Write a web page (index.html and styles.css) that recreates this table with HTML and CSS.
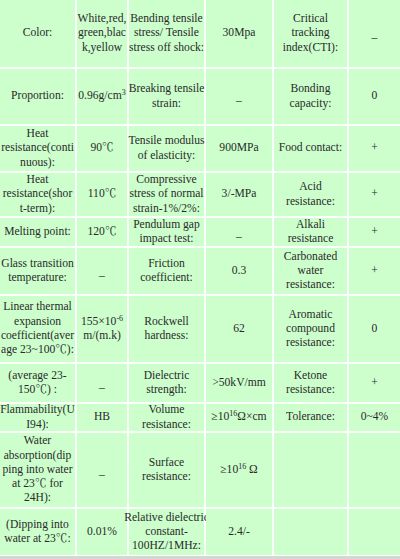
FILE: index.html
```html
<!DOCTYPE html>
<html>
<head>
<meta charset="utf-8">
<link rel="stylesheet" href="styles.css">
</head>
<body>
<div class="sheet">
  <div class="c"><span>Color:</span></div>
  <div class="c"><span>White,red,<br>green,blac<br>k,yellow</span></div>
  <div class="c"><span>Bending tensile<br>stress/ Tensile<br>stress off shock:</span></div>
  <div class="c"><span>30Mpa</span></div>
  <div class="c"><span>Critical<br>tracking<br>index(CTI):</span></div>
  <div class="c dash"><span>–</span></div>

  <div class="c"><span>Proportion:</span></div>
  <div class="c"><span>0.96g/cm<sup>3</sup></span></div>
  <div class="c"><span>Breaking tensile<br>strain:</span></div>
  <div class="c dash"><span>–</span></div>
  <div class="c"><span>Bonding<br>capacity:</span></div>
  <div class="c"><span>0</span></div>

  <div class="c"><span>Heat<br>resistance(conti<br>nuous):</span></div>
  <div class="c"><span>90℃</span></div>
  <div class="c"><span>Tensile modulus<br>of elasticity:</span></div>
  <div class="c"><span>900MPa</span></div>
  <div class="c"><span>Food contact:</span></div>
  <div class="c"><span>+</span></div>

  <div class="c"><span>Heat<br>resistance(shor<br>t-term):</span></div>
  <div class="c"><span>110℃</span></div>
  <div class="c"><span>Compressive<br>stress of normal<br>strain-1%/2%:</span></div>
  <div class="c"><span>3/-MPa</span></div>
  <div class="c"><span>Acid<br>resistance:</span></div>
  <div class="c"><span>+</span></div>

  <div class="c"><span>Melting point:</span></div>
  <div class="c"><span>120℃</span></div>
  <div class="c"><span>Pendulum gap<br>impact test:</span></div>
  <div class="c dash"><span>–</span></div>
  <div class="c"><span>Alkali<br>resistance</span></div>
  <div class="c"><span>+</span></div>

  <div class="c"><span>Glass transition<br>temperature:</span></div>
  <div class="c dash"><span>–</span></div>
  <div class="c"><span>Friction<br>coefficient:</span></div>
  <div class="c"><span>0.3</span></div>
  <div class="c"><span>Carbonated<br>water<br>resistance:</span></div>
  <div class="c"><span>+</span></div>

  <div class="c"><span>Linear thermal<br>expansion<br>coefficient(aver<br>age 23~100℃):</span></div>
  <div class="c"><span>155×10<sup>-6</sup><br>m/(m.k)</span></div>
  <div class="c"><span>Rockwell<br>hardness:</span></div>
  <div class="c"><span>62</span></div>
  <div class="c"><span>Aromatic<br>compound<br>resistance:</span></div>
  <div class="c"><span>0</span></div>

  <div class="c"><span>(average 23-<br>150℃) :</span></div>
  <div class="c dash"><span>–</span></div>
  <div class="c"><span>Dielectric<br>strength:</span></div>
  <div class="c"><span>&gt;50kV/mm</span></div>
  <div class="c"><span>Ketone<br>resistance:</span></div>
  <div class="c"><span>+</span></div>

  <div class="c"><span>Flammability(U<br>I94):</span></div>
  <div class="c"><span>HB</span></div>
  <div class="c"><span>Volume<br>resistance:</span></div>
  <div class="c"><span>≥10<sup>16</sup>Ω×cm</span></div>
  <div class="c"><span>Tolerance:</span></div>
  <div class="c"><span>0~4%</span></div>

  <div class="c"><span>Water<br>absorption(dip<br>ping into water<br>at 23℃ for<br>24H):</span></div>
  <div class="c dash"><span>–</span></div>
  <div class="c"><span>Surface<br>resistance:</span></div>
  <div class="c"><span>≥10<sup>16</sup> Ω</span></div>
  <div class="c"></div>
  <div class="c"></div>

  <div class="c"><span>(Dipping into<br>water at 23℃:</span></div>
  <div class="c"><span>0.01%</span></div>
  <div class="c"><span>Relative dielectric<br>constant-<br>100HZ/1MHz:</span></div>
  <div class="c"><span>2.4/-</span></div>
  <div class="c"></div>
  <div class="c"></div>
</div>
</body>
</html>
```

FILE: styles.css
```css
html, body {
  margin: 0;
  padding: 0;
}
body {
  width: 400px;
  height: 559px;
  background: #d6d6d6;
  overflow: hidden;
  font-family: "Liberation Serif", "Times New Roman", "Noto Serif CJK SC", "Noto Sans CJK SC", serif;
  font-size: 11.6px;
  line-height: 14.3px;
  color: #2a2a2a;
}
.sheet {
  display: grid;
  grid-template-columns: 75px 50px 75px 66px 73px 51px;
  grid-template-rows: 67px 55px 45px 43px 28px 46px 66px 38px 27px 74px 46px;
  gap: 2px;
  background: #fbfffb;
  padding-bottom: 1px;
}
.c {
  background: #ccffcc;
  display: flex;
  align-items: center;
  justify-content: center;
  text-align: center;
  white-space: nowrap;
}
.dash {
  padding-top: 10px;
  box-sizing: border-box;
}
sup {
  font-size: 8px;
  line-height: 0;
  vertical-align: 4px;
}
```
